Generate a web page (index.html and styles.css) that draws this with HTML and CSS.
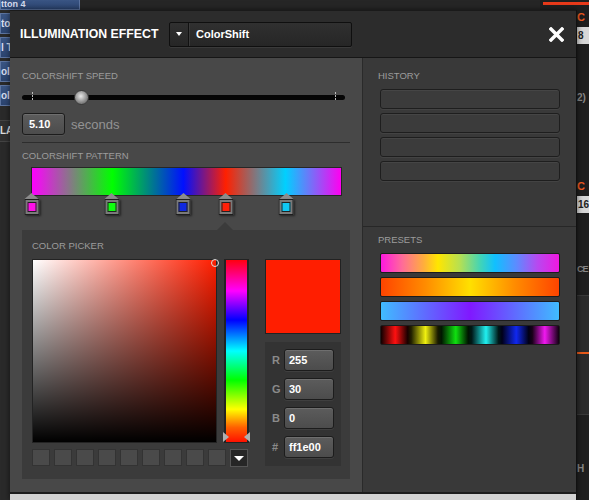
FILE: index.html
```html
<!DOCTYPE html>
<html>
<head>
  <meta charset="UTF-8">
  <title>Illumination Effect</title>
  <link rel="stylesheet" href="styles.css">
</head>
<body>
  <div class="app">
    <div class="app-left">
      <div class="app-btn app-btn-top">tton 4</div>
      <div class="app-btn">to</div>
      <div class="app-btn">l T</div>
      <div class="app-btn">ol</div>
      <div class="app-btn">ol</div>
      <div class="app-label">LA</div>
    </div>
    <div class="app-center"></div>
    <div class="app-right">
      <div class="app-redline"></div>
      <div class="app-tag">C</div>
      <div class="app-num">8</div>
      <div class="app-dim">2)</div>
      <div class="app-tag app-tag-low">C</div>
      <div class="app-num">16</div>
      <div class="app-dim app-dim-ce">CE</div>
      <div class="app-grid"><div class="app-orange"></div></div>
      <div class="app-dim">H</div>
    </div>
  </div>

  <div class="modal">
    <div class="modal-head">
      <h1 class="modal-title">ILLUMINATION EFFECT</h1>
      <div class="select">
        <span class="select-arrow"></span>
        <span class="select-value">ColorShift</span>
      </div>
      <button class="close">
        <svg width="15" height="15" viewBox="0 0 15 15"><path d="M2 2 L13 13 M13 2 L2 13" stroke="#fff" stroke-width="3.4" stroke-linecap="square"/></svg>
      </button>
    </div>

    <div class="modal-body">
      <div class="panel-left">
        <div class="label">COLORSHIFT SPEED</div>
        <div class="slider">
          <span class="tick tick-start"></span>
          <span class="tick tick-end"></span>
          <span class="knob" style="left:16%"></span>
        </div>
        <div class="speed-row">
          <div class="field field-speed">5.10</div>
          <span class="unit">seconds</span>
        </div>
        <div class="rule"></div>

        <div class="label label-gap">COLORSHIFT PATTERN</div>
        <div class="pattern"></div>
        <div class="stops">
          <div class="stop" style="left:0.3%"><span class="stop-tip"></span><span class="stop-box"><i class="c-magenta"></i></span></div>
          <div class="stop" style="left:26%"><span class="stop-tip"></span><span class="stop-box"><i class="c-green"></i></span></div>
          <div class="stop" style="left:48.9%"><span class="stop-tip"></span><span class="stop-box"><i class="c-blue"></i></span></div>
          <div class="stop" style="left:62.7%"><span class="stop-tip"></span><span class="stop-box"><i class="c-red"></i></span></div>
          <div class="stop" style="left:82%"><span class="stop-tip"></span><span class="stop-box"><i class="c-cyan"></i></span></div>
        </div>

        <div class="picker">
          <div class="label">COLOR PICKER</div>
          <div class="picker-main">
            <div class="picker-left">
              <div class="sv-row">
                <div class="sv"><span class="sv-dot"></span></div>
                <div class="hue">
                  <span class="hue-mark hue-mark-l"></span>
                  <span class="hue-mark hue-mark-r"></span>
                </div>
              </div>
              <div class="swatch-row">
                <span class="swatch"></span><span class="swatch"></span><span class="swatch"></span>
                <span class="swatch"></span><span class="swatch"></span><span class="swatch"></span>
                <span class="swatch"></span><span class="swatch"></span><span class="swatch"></span>
                <span class="swatch-more"><span class="down"></span></span>
              </div>
            </div>
            <div class="picker-right">
              <div class="preview"></div>
              <div class="rgb">
                <div class="rgb-row"><span class="rgb-key">R</span><div class="field field-rgb">255</div></div>
                <div class="rgb-row"><span class="rgb-key">G</span><div class="field field-rgb">30</div></div>
                <div class="rgb-row"><span class="rgb-key">B</span><div class="field field-rgb">0</div></div>
                <div class="rgb-row"><span class="rgb-key">#</span><div class="field field-rgb">ff1e00</div></div>
              </div>
            </div>
          </div>
        </div>
      </div>

      <div class="panel-right">
        <div class="history">
          <div class="label label-side">HISTORY</div>
          <div class="slot-list">
            <div class="slot"></div>
            <div class="slot"></div>
            <div class="slot"></div>
            <div class="slot"></div>
          </div>
        </div>
        <div class="presets">
          <div class="label label-side">PRESETS</div>
          <div class="slot-list">
            <div class="preset preset-rainbow"></div>
            <div class="preset preset-fire"></div>
            <div class="preset preset-ice"></div>
            <div class="preset preset-bands"></div>
          </div>
        </div>
      </div>
    </div>
    <div class="modal-foot"></div>
  </div>
</body>
</html>
```

FILE: styles.css
```css
* { box-sizing: border-box; }
body { margin: 0; width: 589px; height: 500px; overflow: hidden; background: #222; font-family: "Liberation Sans", Arial, sans-serif; }

/* app underneath the dialog */
.app { display: flex; width: 589px; height: 500px; }
.app-left { width: 80px; background: #2a2a2a; display: flex; flex-direction: column; gap: 3px; }
.app-btn { height: 21px; background: linear-gradient(#3a5584, #2b4470); border: 1px solid #5c74a0; color: #d8def0; font-size: 10px; font-weight: bold; line-height: 19px; white-space: nowrap; overflow: hidden; }
.app-btn-top { height: 10px; font-size: 9px; line-height: 9px; border-top: none; }
.app-label { margin-top: 11px; height: 22px; border-top: 1px solid #444; border-bottom: 1px solid #444; background: #303030; color: #ddd; font-size: 10px; font-weight: bold; line-height: 20px; }
.app-center { flex: 1; background: #262626; }
.app-right { width: 49px; background: #1f1f1f; display: flex; flex-direction: column; padding-left: 37px; }
.app-redline { height: 3px; margin: 2px 0 0 -34px; background: #e83a1a; }
.app-tag { color: #f05a20; font-size: 11px; font-weight: bold; margin-top: 6px; line-height: 12px; }
.app-tag-low { margin-top: 76px; }
.app-num { margin-top: 4px; height: 17px; background: #d8d8d8; color: #222; font-size: 10px; font-weight: bold; line-height: 17px; padding-left: 1px; }
.app-dim { color: #888; font-size: 10px; font-weight: bold; margin-top: 48px; line-height: 12px; }
.app-dim-ce { margin-top: 50px; font-size: 9px; letter-spacing: -1px; }
.app-grid { margin-top: 20px; height: 120px; background: #2b2b2b; border-top: 1px solid #3a3a3a; border-bottom: 1px solid #3a3a3a; padding-top: 56px; }
.app-orange { height: 2px; background: #e85a1a; }

/* dialog */
.modal { position: absolute; left: 10px; top: 10px; width: 567px; height: 490px; display: flex; flex-direction: column; border-right: 1px solid #111; box-shadow: 0 0 6px rgba(0,0,0,0.6); }
.modal-head { height: 48px; background: #2c2c2c; border-top: 1px solid #1a1a1a; border-bottom: 1px solid #161616; display: flex; align-items: center; padding: 0 12px 0 10px; }
.modal-title { margin: 0; width: 149px; color: #fff; font-size: 12.3px; font-weight: bold; white-space: nowrap; }
.select { width: 183px; height: 25px; display: flex; align-items: center; background: linear-gradient(#303030, #262626); border: 1px solid #0f0f0f; box-shadow: 0 1px 0 #3a3a3a; border-radius: 2px; }
.select-arrow { width: 19px; height: 100%; border-right: 1px solid #111; box-shadow: 1px 0 0 #3a3a3a; display: flex; align-items: center; justify-content: center; }
.select-arrow::before { content: ""; border-left: 3px solid transparent; border-right: 3px solid transparent; border-top: 4px solid #fff; }
.select-value { color: #fff; font-size: 11px; font-weight: bold; margin-left: 7px; }
.close { margin-left: auto; background: none; border: none; padding: 0; width: 15px; height: 15px; cursor: pointer; display: block; }
.close svg { display: block; }

.modal-body { height: 434px; display: flex; }
.modal-foot { flex: 1; border-top: 2px solid #1c1c1c; background: #d2d2d2; }

.label { color: #9c9c9c; font-size: 9.5px; line-height: 12px; height: 12px; white-space: nowrap; }
.label-gap { margin-top: 7px; }

.panel-left { width: 352px; background: #484848; padding: 12px 12px 0 12px; }
.slider { position: relative; width: 323px; height: 15px; margin-top: 8px; }
.slider::before { content: ""; position: absolute; left: 0; right: 0; top: 5px; height: 5px; background: #050505; border-radius: 3px; }
.tick { position: absolute; top: 2px; width: 1px; height: 8px; background: repeating-linear-gradient(#bbb 0 2px, transparent 2px 3px); }
.tick-start { left: 10px; }
.tick-end { left: 313px; }
.knob { position: absolute; top: 0; width: 15px; height: 15px; border-radius: 50%; border: 1px solid #3a3a3a; background: radial-gradient(circle at 45% 40%, #e8e8e8 0, #b0b0b0 35%, #808080 65%, #585858 100%); }

.speed-row { display: flex; align-items: center; gap: 6px; margin-top: 8px; }
.field { height: 22px; background: linear-gradient(#5c5c5c, #4c4c4c); border: 1px solid #1c1c1c; border-radius: 3px; box-shadow: inset 0 1px 0 rgba(255,255,255,0.12), 0 1px 0 rgba(255,255,255,0.06); color: #fff; font-size: 11px; font-weight: bold; line-height: 20px; padding-left: 6px; }
.field-speed { width: 43px; }
.unit { color: #939393; font-size: 13px; }
.rule { margin-top: 7px; width: 328px; height: 1px; background: #2d2d2d; }

.pattern { margin: 5px 0 0 9px; width: 311px; height: 29px; border: 1px solid #262626; background: linear-gradient(to right, #ff00ff 0%, #00ff00 26%, #0010ff 49%, #ff2000 62.7%, #00d0ff 82%, #ff00f0 100%); }
.stops { position: relative; margin: -4px 0 0 9px; width: 311px; height: 24px; }
.stop { position: absolute; top: 1px; width: 15px; transform: translateX(-50%); display: flex; flex-direction: column; align-items: center; }
.stop-tip { width: 0; height: 0; border-left: 7px solid transparent; border-right: 7px solid transparent; border-bottom: 6px solid #8c8c8c; }
.stop-box { width: 15px; height: 16px; background: #7a7a7a; border: 1px solid #1e1e1e; padding: 2px; box-shadow: 1px 1px 2px rgba(0,0,0,0.5); }
.stop-box i { display: block; width: 100%; height: 100%; border: 1px solid #222; }
.c-magenta { background: #ff10e8; }
.c-green { background: #10ff10; }
.c-blue { background: #1028e0; }
.c-red { background: #ff2008; }
.c-cyan { background: #10c8f4; }

.picker { position: relative; margin-top: 14px; width: 328px; background: #3b3b3b; padding: 10px 10px 12px 10px; }
.picker::before { content: ""; position: absolute; top: -8px; left: 195px; border-left: 8px solid transparent; border-right: 8px solid transparent; border-bottom: 8px solid #3b3b3b; }
.picker-main { display: flex; gap: 16px; margin-top: 7px; }
.picker-left { display: flex; flex-direction: column; gap: 6px; }
.sv-row { display: flex; gap: 7px; }
.sv { position: relative; width: 185px; height: 184px; border: 1px solid #232323; background: linear-gradient(to top, #000 0%, rgba(0,0,0,0) 100%), linear-gradient(to right, #fff 0%, #ff1e00 100%); }
.sv-dot { position: absolute; right: -3px; top: -1px; width: 8px; height: 8px; border-radius: 50%; border: 1px solid #ddd; }
.hue { position: relative; width: 25px; height: 184px; border: 1px solid #232323; border-width: 1px 2px; background: linear-gradient(to bottom, #ff0010 0%, #ff00ff 17%, #0000ff 33%, #00ffff 50%, #00ff00 66%, #ffff00 82%, #ff6000 92%, #ff1000 100%); }
.hue-mark { position: absolute; bottom: 0; width: 0; height: 0; border-top: 5px solid transparent; border-bottom: 5px solid transparent; }
.hue-mark-l { left: -3px; border-left: 6px solid #b0b0b0; }
.hue-mark-r { right: -3px; border-right: 6px solid #b0b0b0; }
.swatch-row { display: flex; gap: 4px; align-items: flex-start; }
.swatch { width: 18px; height: 17px; background: #4a4a4a; border: 1px solid #333; }
.swatch-more { width: 18px; height: 18px; background: #262626; border: 1px solid #555; display: flex; align-items: center; justify-content: center; }
.down { border-left: 5px solid transparent; border-right: 5px solid transparent; border-top: 5px solid #fff; }
.picker-right { width: 76px; display: flex; flex-direction: column; gap: 8px; }
.preview { height: 75px; background: #ff1e00; border: 1px solid #222; }
.rgb { height: 124px; background: #333; padding: 7px 7px 0 7px; display: flex; flex-direction: column; gap: 7px; }
.rgb-row { display: flex; align-items: center; gap: 4px; }
.rgb-key { width: 8px; color: #8a8a8a; font-size: 11px; font-weight: bold; }
.field-rgb { width: 50px; padding-left: 4px; }

.panel-right { flex: 1; background: #393939; border-left: 1px solid #2a2a2a; display: flex; flex-direction: column; }
.history { height: 169px; padding: 12px 16px 0 17px; border-bottom: 1px solid #272727; }
.presets { padding: 7px 16px 0 17px; }
.label-side { margin-left: -2px; }
.slot-list { display: flex; flex-direction: column; gap: 4px; margin-top: 7px; }
.slot { height: 20px; background: #3b3b3b; border: 1px solid #1e1e1e; border-radius: 3px; box-shadow: inset 0 1px 0 rgba(255,255,255,0.05), 0 1px 0 rgba(255,255,255,0.05); }
.preset { height: 20px; border: 1px solid #1c1c1c; border-radius: 2px; }
.preset-rainbow { background: linear-gradient(to right, #ff18e0 0%, #ff6c98 12%, #ffae3c 24%, #ffe600 32%, #b8e050 44%, #40d4b8 56%, #10c0ff 64%, #5c8cff 76%, #b848f0 88%, #f018e0 100%); }
.preset-fire { background: linear-gradient(to right, #ff4400 0%, #ff8c00 25%, #ffe000 50%, #ff8c00 75%, #ff4400 100%); }
.preset-ice { background: linear-gradient(to right, #40bcff 0%, #8018ff 50%, #40bcff 100%); }
.preset-bands { background: linear-gradient(to right,
  #100000 0%, #ff1010 8%, #180000 15%,
  #202000 17%, #f0f010 25%, #181800 32%,
  #001800 34%, #10e010 42%, #001400 49%,
  #001818 51%, #20f0f0 59%, #001818 66%,
  #000018 68%, #1028f0 76%, #000014 83%,
  #180018 85%, #f018f0 92%, #100010 100%); }
```
